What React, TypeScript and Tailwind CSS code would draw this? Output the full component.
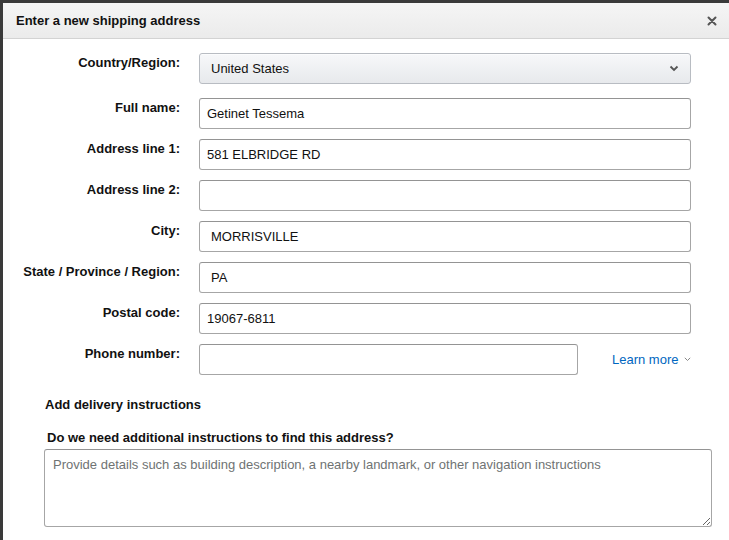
import React from "react";

const font = { fontFamily: '"Liberation Sans", Arial, sans-serif' };

const fields = [
  { label: "Full name:", value: "Getinet Tessema" },
  { label: "Address line 1:", value: "581 ELBRIDGE RD" },
  { label: "Address line 2:", value: "" },
  { label: "City:", value: "MORRISVILLE", indent: true },
  { label: "State / Province / Region:", value: "PA", indent: true },
  { label: "Postal code:", value: "19067-6811" },
];

const inputCls =
  "h-[31px] rounded-[3px] border border-[#a6a6a6] border-t-[#949494] bg-white px-[7px] text-[13px] text-[#111] shadow-[inset_0_1px_0_rgba(255,255,255,0.5),0_1px_0_rgba(255,255,255,0.1)] outline-none";

function Label({ children }: { children: React.ReactNode }) {
  return (
    <div className="w-[177px] shrink-0 text-right text-[13px] font-bold leading-[19px] text-[#111]">
      {children}
    </div>
  );
}

export default function App() {
  return (
    <div className="h-[540px] w-[729px] overflow-hidden bg-[#3a3a3a] pl-[3px] pt-[3px]" style={font}>
      <div className="h-full bg-white">
        {/* Header */}
        <div className="flex h-[36px] items-center justify-between border-b border-[#d3d3d3] bg-gradient-to-b from-[#f5f5f5] to-[#ebebeb] pl-[13px] pr-[12px]">
          <h2 className="text-[13px] font-bold text-[#111]">Enter a new shipping address</h2>
          <svg width="10" height="10" viewBox="0 0 10 10" className="mt-[1px]">
            <path d="M1.5 1.5l7 7M8.5 1.5l-7 7" stroke="#555" strokeWidth="2" strokeLinecap="round" />
          </svg>
        </div>

        {/* Form */}
        <div className="pt-[14px]">
          <div className="flex items-start">
            <Label>Country/Region:</Label>
            <div className="ml-[19px] flex h-[31px] w-[492px] items-center justify-between rounded-[3px] border border-[#b8bcc2] bg-gradient-to-b from-[#f7f8fa] to-[#e7e9ec] pl-[11px] pr-[11px] text-[13px] text-[#111] shadow-[0_1px_0_rgba(255,255,255,0.6)_inset]">
              <span>United States</span>
              <svg width="10" height="7" viewBox="0 0 10 7">
                <path d="M1.5 1.5l3.5 3.5 3.5-3.5" fill="none" stroke="#555" strokeWidth="1.8" />
              </svg>
            </div>
          </div>

          <div className="mt-[14px] flex flex-col gap-[10px]">
            {fields.map((f) => (
              <div key={f.label} className="flex items-start">
                <Label>{f.label}</Label>
                <input
                  readOnly
                  value={f.value}
                  className={`${inputCls} ml-[19px] w-[492px] ${f.indent ? "pl-[11px]" : ""}`}
                  style={font}
                />
              </div>
            ))}
            <div className="flex items-start">
              <Label>Phone number:</Label>
              <input readOnly value="" className={`${inputCls} ml-[19px] w-[379px]`} style={font} />
              <a className="ml-[34px] mt-[6px] flex items-center gap-[6px] text-[13px] text-[#0066c0]">
                Learn more
                <svg width="7" height="5" viewBox="0 0 7 5">
                  <path d="M0.8 0.8l2.7 2.7 2.7-2.7" fill="none" stroke="#888" strokeWidth="1" />
                </svg>
              </a>
            </div>
          </div>

          <div className="ml-[42px] mt-[20px] text-[13px] font-bold leading-[19px] text-[#111]">
            Add delivery instructions
          </div>
          <div className="ml-[44px] mt-[14px] text-[13px] font-bold leading-[19px] text-[#111]">
            Do we need additional instructions to find this address?
          </div>
          <textarea
            readOnly
            placeholder="Provide details such as building description, a nearby landmark, or other navigation instructions"
            className="ml-[41px] mt-[2px] block h-[78px] w-[668px] rounded-[3px] border border-[#a6a6a6] border-t-[#949494] px-[8px] py-[5px] text-[13px] leading-[19px] text-[#111] outline-none placeholder:text-[#6f7373]"
            style={font}
          />
        </div>
      </div>
    </div>
  );
}
